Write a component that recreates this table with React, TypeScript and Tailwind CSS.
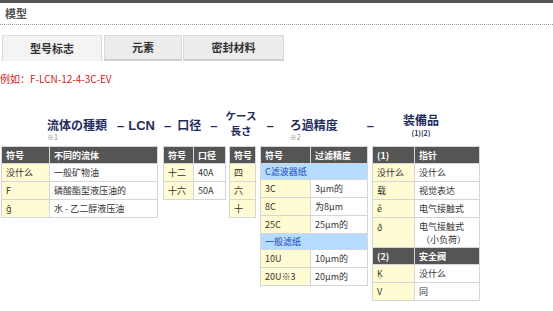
const font = { fontFamily: '"Noto Sans CJK SC", "Noto Sans", sans-serif' };

type Cell = { a: string; b?: string; blue?: boolean; header?: boolean; tall?: boolean };

function Table({ w1, w2, rows }: { w1: number; w2?: number; rows: Cell[] }) {
  const total = w1 + (w2 ?? 0);
  return (
    <table
      style={{ width: total }}
      className="table-fixed border-collapse text-[9px] leading-none text-[#333] border border-[#d6d6d6] whitespace-nowrap"
    >
      <colgroup>
        <col style={{ width: w1 }} />
        {w2 !== undefined && <col style={{ width: w2 }} />}
      </colgroup>
      <tbody>
        {rows.map((r, i) => {
          if (r.header) {
            return (
              <tr key={i} className="h-[17px] bg-[#555555] text-white font-bold">
                <td className="px-[4px] border border-[#d6d6d6]">{r.a}</td>
                {w2 !== undefined && <td className="px-[4px] border border-[#d6d6d6]">{r.b}</td>}
              </tr>
            );
          }
          if (r.blue) {
            return (
              <tr key={i} className="h-[16px] bg-[#b5dcff] text-[#1b4bb8]">
                <td colSpan={2} className="px-[4px] border border-[#d6d6d6]">{r.a}</td>
              </tr>
            );
          }
          return (
            <tr key={i} className={r.tall ? 'h-[30px]' : 'h-[18px]'}>
              <td className={`px-[4px] bg-[#fffbd2] border border-[#d6d6d6] ${r.tall ? 'align-top pt-[5px]' : ''}`}>
                {r.a}
              </td>
              {w2 !== undefined && (
                <td className="px-[4px] bg-white border border-[#d6d6d6] whitespace-pre leading-[13px]">{r.b}</td>
              )}
            </tr>
          );
        })}
      </tbody>
    </table>
  );
}

function Dash({ ml }: { ml: string }) {
  return (
    <div
      className={`${ml} pt-[7px] text-[13px] leading-none font-bold text-[#1f2d5c] shrink-0`}
      style={{ fontFamily: '"Liberation Sans", sans-serif' }}
    >
      –
    </div>
  );
}

export default function App() {
  return (
    <div style={font} className="w-[553px] h-[311px] bg-white overflow-hidden">
      <div className="h-[3px] bg-[#555555]" />
      <div className="h-[22px] border-b border-dotted border-[#999] px-[5px] pt-[5px] text-[11px] font-bold text-[#555] leading-none">
        模型
      </div>

      <div className="flex mt-[10px] ml-[2px] h-[26px] text-[11px] font-bold text-[#333]">
        <div className="w-[100px] flex items-center justify-center bg-[#f4f4f4] border border-[#dcdcdc] border-b-0">型号标志</div>
        <div className="w-[78px] ml-[2px] flex items-center justify-center bg-[#ececec] border border-[#d8d8d8] border-b-2 border-b-[#cfcfcf]">元素</div>
        <div className="w-[101px] ml-[1px] flex items-center justify-center bg-[#ececec] border border-[#d8d8d8] border-b-2 border-b-[#cfcfcf]">密封材料</div>
      </div>

      <div className="mt-[13px] text-[10px] leading-none text-[#d11a1a]">例如：F-LCN-12-4-3C-EV</div>

      <div className="flex items-start h-[34px] mt-[28px] text-[#1f2d5c] font-bold whitespace-nowrap">
        <div className="ml-[47px] pt-[7px] shrink-0">
          <div className="text-[12px] leading-none">流体の種類</div>
          <div className="text-[7px] font-normal text-[#888] mt-[3px] leading-none">※1</div>
        </div>
        <Dash ml="ml-[10px]" />
        <div className="ml-[4px] pt-[7px] text-[13px] leading-none shrink-0" style={{ fontFamily: '"Liberation Sans", sans-serif' }}>LCN</div>
        <Dash ml="ml-[9px]" />
        <div className="ml-[6px] pt-[7px] text-[12px] leading-none shrink-0">口径</div>
        <Dash ml="ml-[9px]" />
        <div className="ml-[8px] -mt-[4px] text-[10.5px] leading-[15px] text-center shrink-0">
          <div>ケース</div>
          <div>長さ</div>
        </div>
        <Dash ml="ml-[10px]" />
        <div className="ml-[16px] pt-[7px] shrink-0">
          <div className="text-[12px] leading-none">ろ過精度</div>
          <div className="text-[7px] font-normal text-[#888] mt-[3px] leading-none">※2</div>
        </div>
        <Dash ml="ml-[29px]" />
        <div className="ml-[29px] pt-[2px] text-center shrink-0">
          <div className="text-[12px] leading-none">装備品</div>
          <div className="text-[7px] mt-[4px] leading-none">(1)(2)</div>
        </div>
      </div>

      <div className="flex items-start ml-[1px]">
        <Table
          w1={48}
          w2={108}
          rows={[
            { a: '符号', b: '不同的流体', header: true },
            { a: '没什么', b: '一般矿物油' },
            { a: 'F', b: '磷酸酯型液压油的' },
            { a: 'ĝ', b: '水 - 乙二醇液压油' },
          ]}
        />
        <div className="ml-[5px]">
          <Table
            w1={30}
            w2={32}
            rows={[
              { a: '符号', b: '口径', header: true },
              { a: '十二', b: '40A' },
              { a: '十六', b: '50A' },
            ]}
          />
        </div>
        <div className="ml-[3px]">
          <Table
            w1={26}
            rows={[
              { a: '符号', header: true },
              { a: '四' },
              { a: '六' },
              { a: '十' },
            ]}
          />
        </div>
        <div className="ml-[4px]">
          <Table
            w1={50}
            w2={57}
            rows={[
              { a: '符号', b: '过滤精度', header: true },
              { a: 'C滤波器纸', blue: true },
              { a: '3C', b: '3μm的' },
              { a: '8C', b: '为8μm' },
              { a: '25C', b: '25μm的' },
              { a: '一般滤纸', blue: true },
              { a: '10U', b: '10μm的' },
              { a: '20U※3', b: '20μm的' },
            ]}
          />
        </div>
        <div className="ml-[4px]">
          <Table
            w1={42}
            w2={65}
            rows={[
              { a: '   (1)', b: '指针', header: true },
              { a: '没什么', b: '没什么' },
              { a: '载', b: '视觉表达' },
              { a: 'ê', b: '电气接触式' },
              { a: 'ð', b: '电气接触式\n （小负荷）', tall: true },
              { a: '   (2)', b: '安全阀', header: true },
              { a: 'Ķ', b: '没什么' },
              { a: 'V', b: '同' },
            ]}
          />
        </div>
      </div>
    </div>
  );
}
